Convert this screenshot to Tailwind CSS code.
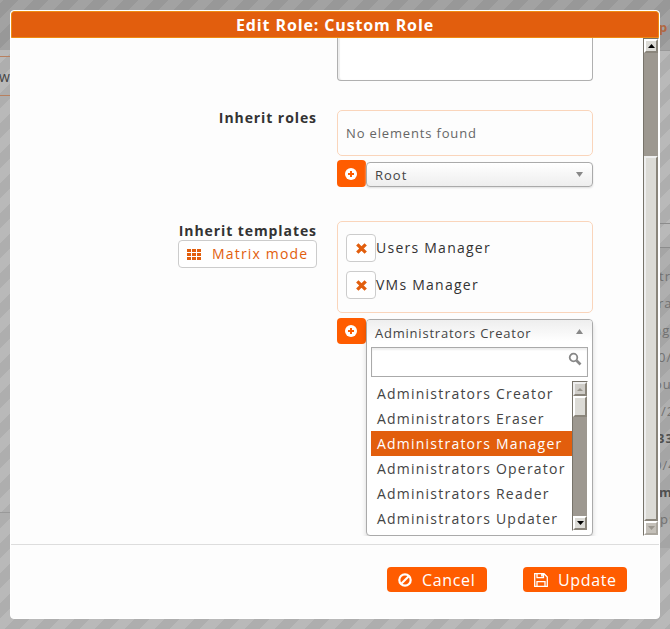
<!DOCTYPE html>
<html lang="en">
<head>
<meta charset="utf-8">
<title>Edit Role</title>
<script src="https://cdn.jsdelivr.net/npm/@tailwindcss/browser@4"></script>
</head>
<body class="relative w-[670px] h-[629px] overflow-hidden font-['Open_Sans','Noto_Sans',sans-serif] tracking-[1px] text-[#333] bg-[#b9b9b9]">
<!-- page behind the dialog -->
<div class="absolute inset-0 bg-[repeating-linear-gradient(135deg,#b9b9b9_0px,#b9b9b9_2.828px,#aeaeae_2.828px,#aeaeae_13.435px,#b9b9b9_13.435px,#b9b9b9_21.213px)]"></div>
<div class="absolute inset-x-0 top-0 h-[50px] bg-black/12"></div>
<div class="absolute left-0 top-[56px] w-[10px] h-[40px] border-y border-[#b8805f] text-[14px] leading-[40px] overflow-hidden"><span class="-ml-[1px] text-[#444]">w</span></div>
<div class="absolute left-0 top-[512px] w-[10px] h-px bg-[#999]"></div>
<div class="absolute right-0 top-[50px] w-[10px] h-px bg-[#999]"></div>
<div class="absolute right-0 top-[223px] w-[10px] h-[25px] border-y border-[#8c8c8c]"></div>
<div class="absolute right-0 top-[248px] w-[10px] h-[300px] bg-black/5"></div>
<div class="absolute left-[659px] top-0 w-[11px] h-[629px] overflow-hidden whitespace-nowrap text-[13px] leading-[18px] text-[#717171]">
  <b class="absolute left-0 top-[18px] text-[#b0673f]">p</b>
  <span class="absolute left-0 top-[267px]">tr</span>
  <span class="absolute left-[-1px] top-[294px]">ra</span>
  <span class="absolute left-[-5px] top-[321px]">ag</span>
  <span class="absolute left-[-1px] top-[348px]">0/</span>
  <span class="absolute left-[-5px] top-[375px]">ou</span>
  <span class="absolute left-[2px] top-[402px]">/2</span>
  <b class="absolute left-[-2px] top-[429px] text-[#505050]">33</b>
  <span class="absolute left-[-5px] top-[456px]">0/4</span>
  <b class="absolute left-0 top-[483px] text-[#505050]">m</b>
  <span class="absolute left-[1px] top-[510px]">pr</span>
</div>

<!-- dialog -->
<div class="absolute left-[10px] top-[10px] w-[650px] h-[609px] flex flex-col rounded-[4px] border border-white bg-[#fdfdfd] overflow-hidden">
  <h1 class="h-[27px] shrink-0 rounded-t-[3px] border border-[#ee8b12] bg-[#e25e0d] text-center text-[16px] leading-[27px] font-bold tracking-[0.87px] text-white">Edit Role: Custom Role</h1>
  <div class="h-[498px] shrink-0 flex overflow-hidden">
    <div class="flex-1 grid grid-cols-[306px_256px] content-start gap-x-[20px]">
      <div class="h-[72px]"></div>
      <div class="h-[43px] rounded-b-[4px] border border-t-0 border-[#b0b0b0] bg-white shadow-[inset_2px_0_1px_#eee]"></div>

      <div class="h-[111px] text-right text-[14px] leading-[16px] font-bold tracking-[0.92px]">Inherit roles</div>
      <div class="h-[111px]">
        <div class="h-[46px] rounded-[5px] border border-[#fad5bb] px-[8px] text-[13px] leading-[44px] tracking-[0.84px] text-[#666]">No elements found</div>
        <div class="mt-[4px] flex items-end">
          <button class="w-[29px] h-[27px] rounded-[4px] bg-[#ff5c00] flex items-center justify-center pr-[1px]"><svg width="12" height="12" viewBox="0 0 12 12"><circle cx="6" cy="6" r="6" fill="#fff"/><path d="M6 3v6M3 6h6" stroke="#ff5c00" stroke-width="2"/></svg></button>
          <div class="flex-1 h-[25px] rounded-[4px] border border-[#aaa] bg-linear-to-b from-white to-[#eee] shadow-[0_1px_2px_#ddd] flex items-center justify-between pl-[8px] pr-[9px] text-[13px] text-[#444]"><span class="pt-[2px]">Root</span><svg width="7" height="5" viewBox="0 0 7 5"><path d="M0 0h7L3.500 5z" fill="#888"/></svg></div>
        </div>
      </div>

      <div class="flex flex-col items-end pt-[1px] text-[14px] leading-[18px] font-bold tracking-[0.92px]"><span>Inherit templates</span>
        <button class="w-[139px] h-[28px] rounded-[4px] border border-[#ccc] bg-white flex items-center pl-[8px] gap-[11px] text-[14px] font-normal tracking-[1.18px] text-[#e25e0d]"><svg width="14" height="11" viewBox="0 0 14 11" fill="#e25e0d"><path d="M0 0h4v3H0zM5 0h4v3H5zM10 0h4v3h-4zM0 4h4v3H0zM5 4h4v3H5zM10 4h4v3h-4zM0 8h4v3H0zM5 8h4v3H5zM10 8h4v3h-4z"/></svg><span>Matrix mode</span></button>
      </div>
      <div>
        <div class="h-[92px] rounded-[5px] border border-[#fad5bb] pt-[12px] pl-[8px] flex flex-col gap-[9px] text-[14px] tracking-[1.25px]">
          <div class="flex items-center h-[28px]"><button class="w-[30px] h-[28px] rounded-[4px] border border-[#ccc] bg-white flex items-center justify-center"><svg width="11" height="11" viewBox="0 0 11 11"><path d="M1.300 1.300l8.400 8.400M9.700 1.300l-8.400 8.400" stroke="#e25e0d" stroke-width="3.300"/></svg></button><span class="pb-[2px]">Users Manager</span></div>
          <div class="flex items-center h-[28px]"><button class="w-[30px] h-[28px] rounded-[4px] border border-[#ccc] bg-white flex items-center justify-center"><svg width="11" height="11" viewBox="0 0 11 11"><path d="M1.300 1.300l8.400 8.400M9.700 1.300l-8.400 8.400" stroke="#e25e0d" stroke-width="3.300"/></svg></button><span class="pb-[2px]">VMs Manager</span></div>
        </div>
        <div class="mt-[5px] flex items-start">
          <button class="w-[29px] h-[26px] rounded-[4px] bg-[#ff5c00] flex items-center justify-center pr-[1px]"><svg width="12" height="12" viewBox="0 0 12 12"><circle cx="6" cy="6" r="6" fill="#fff"/><path d="M6 3v6M3 6h6" stroke="#ff5c00" stroke-width="2"/></svg></button>
          <div class="mt-[1px] flex-1 h-[217px] rounded-[4px] border border-[#aaa] bg-white shadow-[0_4px_5px_rgba(0,0,0,.15)]">
            <div class="h-[27px] rounded-t-[3px] bg-linear-to-b from-[#eee] to-white to-80% flex items-center justify-between pl-[8px] pr-[9px] text-[13px] tracking-[0.78px] text-[#444]"><span>Administrators Creator</span><svg class="mb-[4px]" width="7" height="5" viewBox="0 0 7 5"><path d="M0 5h7L3.500 0z" fill="#888"/></svg></div>
            <div class="mx-[4px] h-[30px] border border-[#aaa] shadow-[inset_0_2px_2px_#eee] flex justify-end pt-[4px] pr-[5px]"><svg width="14" height="14" viewBox="0 0 14 14" fill="none" stroke="#888"><circle cx="5.500" cy="5.500" r="3.800" stroke-width="1.800"/><path d="M8.500 8.500l4 4" stroke-width="2.600"/></svg></div>
            <div class="mx-[4px] mt-[4px] h-[150px] flex">
              <ul class="flex-1 text-[14px] leading-[25px] tracking-[1.22px] text-[#444] whitespace-nowrap *:pl-[6px]">
                <li>Administrators Creator</li><li>Administrators Eraser</li><li class="bg-[#e25e0d] text-white">Administrators Manager</li><li>Administrators Operator</li><li>Administrators Reader</li><li>Administrators Updater</li>
              </ul>
              <div class="w-[16px] border border-r-white border-b-white border-[#77736a] bg-[#9d9890] flex flex-col">
                <div class="h-[14px] shrink-0 border-2 border-t-[#eee] border-l-[#eee] border-r-[#8a857b] border-b-[#8a857b] bg-[#cfcdc8] flex items-center justify-center"><svg width="6" height="3" viewBox="0 0 6 3"><path d="M0 3h6L3 0z" fill="#99958c"/></svg></div>
                <div class="h-[21px] shrink-0 border-2 border-t-white border-l-white border-r-[#8a857b] border-b-[#8a857b] bg-[#dcdbd6]"></div>
                <div class="mt-auto h-[14px] shrink-0 border-2 border-t-white border-l-white border-r-[#8a857b] border-b-[#8a857b] bg-[#dcdbd6] flex items-center justify-center"><svg width="7" height="4" viewBox="0 0 7 4"><path d="M0 0h7L3.500 4z"/></svg></div>
              </div>
            </div>
          </div>
        </div>
      </div>
    </div>
    <div class="w-[16px] border border-[#77736a] border-r-white border-b-white bg-[#9d9890] flex flex-col">
      <div class="h-[14px] shrink-0 border-2 border-t-white border-l-white border-r-[#8a857b] border-b-[#8a857b] bg-[#dcdbd6] flex items-center justify-center"><svg width="7" height="4" viewBox="0 0 7 4"><path d="M0 4h7L3.500 0z"/></svg></div>
      <div class="mt-[103px] flex-1 border-2 border-t-[#eee] border-l-[#eee] border-r-[#8a857b] border-b-[#8a857b] bg-[#dcdbd6]"></div>
      <div class="h-[14px] shrink-0 border-2 border-t-white border-l-white border-r-[#aaa69e] border-b-[#aaa69e] bg-[#c4c0b9] flex items-center justify-center"><svg width="7" height="4" viewBox="0 0 7 4"><path d="M0 0h7L3.500 4z" fill="#9a968e"/></svg></div>
    </div>
  </div>
  <div class="mt-[8px] flex-1 border-t border-[#ddd] flex justify-end items-start pt-[22px] pr-[32px] gap-[36px] text-[16px] tracking-[0.65px] text-white">
    <button class="w-[100px] h-[25px] rounded-[4px] bg-[#ff5c00] flex items-center pl-[11px] gap-[10px]"><svg width="14" height="14" viewBox="0 0 14 14" fill="none" stroke="#fff" stroke-width="2.200"><circle cx="7" cy="7" r="5.700"/><path d="M3 11L11 3"/></svg><span>Cancel</span></button>
    <button class="w-[104px] h-[25px] rounded-[4px] bg-[#ff5c00] flex items-center pl-[11px] gap-[10px]"><svg width="14" height="14" viewBox="0 0 14 14" fill="none" stroke="#fff" stroke-width="1.300"><path d="M.7.7h9.300l3.300 3.300v9.300H.7zM3 .7v4h6.500v-4M3 13.300V8.700h8v4.600"/><path d="M8 1v2.500" stroke-width="1.800"/></svg><span>Update</span></button>
  </div>
</div>
</body>
</html>
